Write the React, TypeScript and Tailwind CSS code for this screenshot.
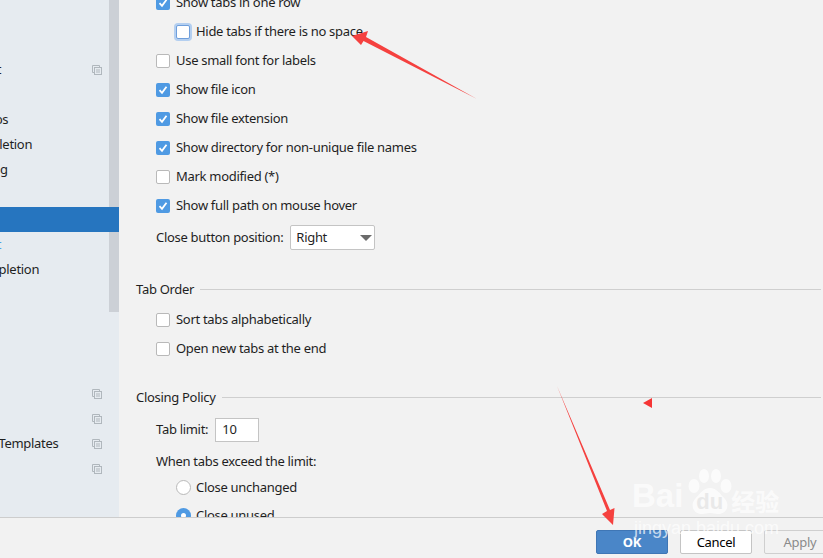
const font = { fontFamily: '"Noto Sans", "Noto Sans CJK SC", sans-serif' };

function CopyIcon() {
  return (
    <svg width="10" height="10" viewBox="0 0 10 10" fill="none" stroke="#b0b7bd" strokeWidth="1" className="shrink-0">
      <path d="M7.5 2.5V.5H.5v7h2" />
      <rect x="2.5" y="2.5" width="7" height="7" />
      <path d="M4 5h4M4 7h4" />
    </svg>
  );
}

function Check({ checked = false, focus = false }: { checked?: boolean; focus?: boolean }) {
  if (checked) {
    return (
      <span className="flex h-[14px] w-[14px] shrink-0 items-center justify-center rounded-[2px] bg-[#4f9ae3]">
        <svg width="10" height="10" viewBox="0 0 10 10" fill="none" stroke="white" strokeWidth="1.8">
          <path d="M1.5 5.2 4 7.8 8.5 1.8" />
        </svg>
      </span>
    );
  }
  return (
    <span
      className={
        focus
          ? "h-[14px] w-[14px] shrink-0 rounded-[2px] border border-[#6f9fdc] bg-white shadow-[0_0_0_2px_#b4cff0]"
          : "h-[14px] w-[14px] shrink-0 rounded-[2px] border border-[#b9b9b9] bg-white"
      }
    />
  );
}

function Row({ label, checked, focus, indent }: { label: string; checked?: boolean; focus?: boolean; indent?: boolean }) {
  return (
    <div className={indent ? "flex h-[29px] items-center gap-[6px] pl-[57px]" : "flex h-[29px] items-center gap-[6px] pl-[37px]"}>
      <Check checked={checked} focus={focus} />
      <span>{label}</span>
    </div>
  );
}

function SectionHead({ label, className }: { label: string; className: string }) {
  return (
    <div className={"flex h-[29px] items-center gap-[6px] pl-[17px] " + className}>
      <span>{label}</span>
      <span className="mr-[2px] h-px flex-1 bg-[#cfcfcf]" />
    </div>
  );
}

function NavRow({ text, offset, icon, selected, link }: { text?: string; offset?: string; icon?: boolean; selected?: boolean; link?: boolean }) {
  return (
    <div className={selected ? "flex h-[25px] w-[119px] items-center overflow-hidden bg-[#2675bf]" : "flex h-[25px] w-[109px] items-center overflow-hidden"}>
      {text ? (
        <span className={(offset ?? "") + " shrink-0 whitespace-nowrap " + (link ? "text-[#4aa3e8]" : "text-[#1f1f1f]")}>{text}</span>
      ) : null}
      {icon ? (
        <span className="ml-auto mr-[7px]">
          <CopyIcon />
        </span>
      ) : null}
    </div>
  );
}

function Paw() {
  return (
    <div className="relative ml-[2px] h-[46px] w-[50px] shrink-0">
      <svg width="50" height="46" viewBox="0 0 50 46" fill="white" fillOpacity="0.7" className="absolute left-0 top-0">
        <ellipse cx="9" cy="17" rx="5.5" ry="7" />
        <ellipse cx="19" cy="7" rx="5" ry="7" />
        <ellipse cx="31" cy="7" rx="5" ry="7" />
        <ellipse cx="41" cy="17" rx="5.5" ry="7" />
        <path d="M25 19c7 0 10 6 15 11 5 6 2 15-7 15-3 0-5-1-8-1s-5 1-8 1c-9 0-12-9-7-15 5-5 8-11 15-11z" />
      </svg>
      <span className="absolute left-[11px] top-[22px] text-[22px] font-bold leading-none text-[#e9e9e9]" style={{ fontFamily: '"Liberation Sans", sans-serif' }}>du</span>
    </div>
  );
}

export default function App() {
  return (
    <div className="relative flex h-[558px] w-[823px] flex-col overflow-hidden bg-[#f2f2f2] text-[13px] leading-none tracking-[-0.3px] text-[#1f1f1f]" style={font}>
      <div className="flex h-[517px] shrink-0 overflow-hidden">
        <aside className="relative w-[119px] shrink-0 bg-[#e6ebf0]">
          <div className="absolute right-0 top-0 h-[312px] w-[10px] bg-[#c9cdd3]/90" />
          <div className="relative flex flex-col pt-[57px]">
            <NavRow text="Font" offset="-ml-[25px]" icon />
            <NavRow />
            <NavRow text="Editor Tabs" offset="-ml-[56px]" />
            <NavRow text="Code Completion" offset="-ml-[69px]" />
            <NavRow text="Auto Import Setting" offset="-ml-[108px]" />
            <NavRow />
            <NavRow selected />
            <NavRow text="Font" offset="-ml-[25px]" link />
            <NavRow text="Code Completion" offset="-ml-[62px]" />
            <div className="h-[99px]" />
            <NavRow icon />
            <NavRow icon />
            <NavRow text="File and Code Templates" offset="-ml-[83px]" icon />
            <NavRow icon />
          </div>
        </aside>
        <main className="-mt-[12px] min-w-0 flex-1">
          <Row label="Show tabs in one row" checked />
          <Row label="Hide tabs if there is no space" focus indent />
          <Row label="Use small font for labels" />
          <Row label="Show file icon" checked />
          <Row label="Show file extension" checked />
          <Row label="Show directory for non-unique file names" checked />
          <Row label="Mark modified (*)" />
          <Row label="Show full path on mouse hover" checked />
          <div className="mt-[3px] flex h-[29px] items-center gap-[7px] pl-[37px]">
            <span>Close button position:</span>
            <div className="flex h-[25px] w-[85px] items-center justify-between rounded-[2px] border border-[#c4c4c4] bg-white pl-[5px] pr-[2px]">
              <span>Right</span>
              <svg width="12" height="6" viewBox="0 0 12 6" fill="#6b6b6b">
                <path d="M0 0h12L6 6z" />
              </svg>
            </div>
          </div>
          <SectionHead label="Tab Order" className="mt-[23px]" />
          <div className="mt-px" />
          <Row label="Sort tabs alphabetically" />
          <Row label="Open new tabs at the end" />
          <SectionHead label="Closing Policy" className="mt-[20px]" />
          <div className="mt-[3px] flex h-[29px] items-center gap-[7px] pl-[37px]">
            <span>Tab limit:</span>
            <div className="flex h-[24px] w-[44px] items-center border border-[#c4c4c4] bg-white pl-[6px]">10</div>
          </div>
          <div className="mt-[4px] flex h-[26px] items-center pl-[37px]">When tabs exceed the limit:</div>
          <div className="flex h-[26px] items-center gap-[5px] pl-[57px]">
            <span className="h-[15px] w-[15px] rounded-full border border-[#b9b9b9] bg-white" />
            <span>Close unchanged</span>
          </div>
          <div className="mt-[2px] flex h-[26px] items-center gap-[5px] pl-[57px]">
            <span className="flex h-[15px] w-[15px] items-center justify-center rounded-full bg-[#4f9ae3]">
              <span className="h-[5px] w-[5px] rounded-full bg-white" />
            </span>
            <span>Close unused</span>
          </div>
        </main>
      </div>
      <footer className="z-10 flex h-[41px] shrink-0 gap-[12px] border-t border-[#cdcdcd] bg-[#f2f2f2] pl-[596px] pt-[12px]">
        <button className="flex h-[24px] w-[72px] shrink-0 items-center justify-center rounded-[2px] border border-[#3f76b5] bg-[#4a86c8] font-bold text-white">OK</button>
        <button className="flex h-[24px] w-[72px] shrink-0 items-center justify-center rounded-[2px] border border-[#c4c4c4] bg-white text-black">Cancel</button>
        <button className="flex h-[24px] w-[72px] shrink-0 items-center justify-center rounded-[2px] border border-[#cfcfcf] bg-[#f2f2f2] text-[#8a8a8a]">Apply</button>
      </footer>

      {/* Watermark over the dialog */}
      <div className="pointer-events-none absolute left-[632px] top-[469px] z-20 flex w-[190px] flex-col tracking-normal text-white/70">
        <div className="flex items-end">
          <span className="text-[33px] font-bold leading-[38px]" style={{ fontFamily: '"Liberation Sans", sans-serif' }}>Bai</span>
          <Paw />
          <span className="-ml-[4px] text-[24px] font-bold leading-[28px]" style={{ fontFamily: '"Noto Sans CJK SC", sans-serif' }}>经验</span>
        </div>
        <span className="ml-[2px] mt-[4px] text-[18px] leading-none" style={{ fontFamily: '"Liberation Sans", sans-serif' }}>jingyan.baidu.com</span>
      </div>

      {/* Red annotations */}
      <svg className="pointer-events-none absolute left-0 top-0 z-30" width="823" height="558" viewBox="0 0 823 558">
        <path d="M477 99 L366 37 L368 31 L352 36 L361 45 L363.5 41 Z" fill="#f5413f" />
        <path d="M557 386 L607 511 L602 514 L613 525 L614.5 508 L610 510 Z" fill="#f5413f" />
        <path d="M643 403 L652 398 L652 408 Z" fill="#f53535" />
      </svg>
    </div>
  );
}
